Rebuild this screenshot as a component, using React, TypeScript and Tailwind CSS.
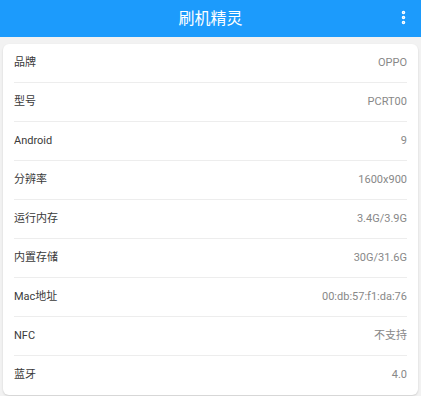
import { EllipsisVertical } from "lucide-react";

const rows: [string, string][] = [
  ["品牌", "OPPO"],
  ["型号", "PCRT00"],
  ["Android", "9"],
  ["分辨率", "1600x900"],
  ["运行内存", "3.4G/3.9G"],
  ["内置存储", "30G/31.6G"],
  ["Mac地址", "00:db:57:f1:da:76"],
  ["NFC", "不支持"],
  ["蓝牙", "4.0"],
];

export default function App() {
  return (
    <div
      className="w-[421px] h-[396px] overflow-hidden bg-[#f2f2f2]"
      style={{ fontFamily: 'Roboto, "Noto Sans CJK SC", sans-serif' }}
    >
      {/* HEADER */}
      <div className="relative h-[37px] bg-[#1c9bfc] flex items-center justify-center">
        <h1 className="text-white text-[16px] leading-none">刷机精灵</h1>
        <EllipsisVertical className="absolute right-[9px] top-[9px] text-white" size={17} strokeWidth={3} />
      </div>

      {/* INFO CARD */}
      <div className="mx-[3px] mt-[7px] bg-white rounded-[6px] shadow-[0_1px_2px_rgba(0,0,0,0.15)] px-[11px]">
        {rows.map(([label, value], i) => (
          <div
            key={label}
            className={
              "h-[39px] flex items-center justify-between text-[11px] " +
              (i < rows.length - 1 ? "border-b border-[#ededed]" : "")
            }
          >
            <span className="text-[#3a3a3a]">{label}</span>
            <span className="text-[#888888]">{value}</span>
          </div>
        ))}
      </div>
    </div>
  );
}
